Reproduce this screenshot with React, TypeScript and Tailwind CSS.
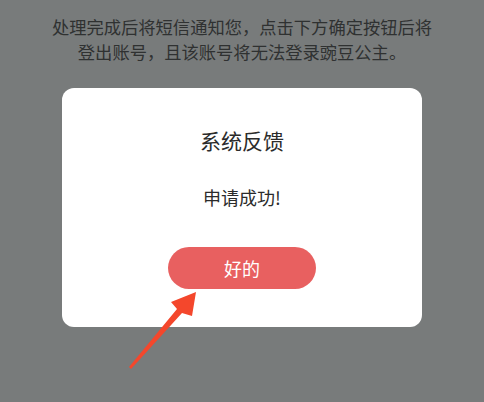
export default function App() {
  return (
    <div
      className="relative w-[484px] h-[402px] overflow-hidden bg-[#787b7b] flex flex-col items-center"
      style={{ fontFamily: '"Noto Sans CJK SC", "Noto Sans", sans-serif' }}
    >
      <div className="pt-[14px] text-[17.3px] leading-[25px] text-[#2f3131] text-center">
        <p>处理完成后将短信通知您，点击下方确定按钮后将</p>
        <p>登出账号，且该账号将无法登录豌豆公主。</p>
      </div>

      <div className="mt-[24px] w-[360px] h-[239px] rounded-[12px] bg-white flex flex-col items-center pt-[38px]">
        <h2 className="text-[21px] leading-[28px] text-[#2b2b2b]">系统反馈</h2>
        <p className="mt-[31px] text-[18px] leading-[24px] text-[#2b2b2b]">申请成功!</p>
        <button className="mt-[38px] w-[148px] h-[42px] rounded-full bg-[#e86060] text-white text-[18px] leading-none">
          好的
        </button>
      </div>

      {/* pointer arrow drawn over the dialog */}
      <svg
        className="absolute left-0 top-0 pointer-events-none"
        width="484"
        height="402"
        viewBox="0 0 484 402"
      >
        <polygon
          points="196,292 192,316 182,313 131,369 129,367 177,309 171,302"
          fill="#f4472c"
        />
      </svg>
    </div>
  );
}
